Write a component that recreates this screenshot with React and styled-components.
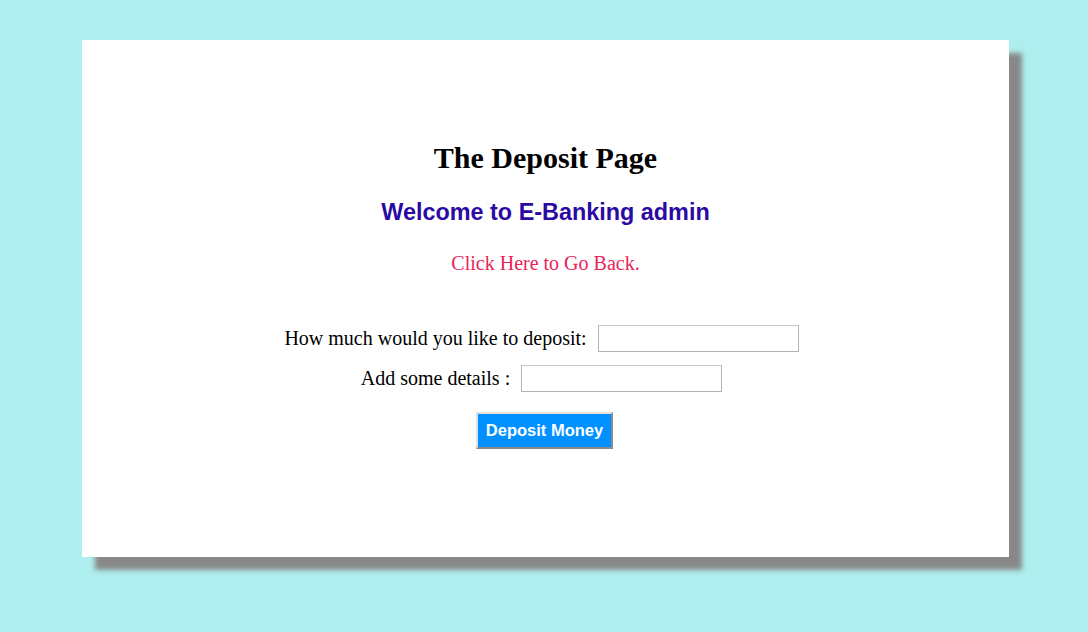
import React from 'react'
import styled, { createGlobalStyle } from 'styled-components'

const GlobalStyle = createGlobalStyle`
  html, body {
    margin: 0;
    padding: 0;
    background: #afeeee;
  }
  body {
    font-family: "Liberation Serif", "Times New Roman", serif;
  }
`

const Page = styled.div`
  padding: 40px 79px 0 82px;
  min-height: 632px;
  box-sizing: border-box;
`

const Card = styled.div`
  height: 517px;
  background: #ffffff;
  box-shadow: 13px 13px 5px #888888;
  display: flex;
  flex-direction: column;
  align-items: center;
  padding-top: 101px;
  box-sizing: border-box;
`

const Title = styled.h2`
  margin: 0;
  font-size: 30px;
  font-weight: bold;
  color: #000;
`

const Welcome = styled.h3`
  margin: 24px 0 0;
  font-family: "Liberation Sans", Arial, sans-serif;
  font-size: 23.4px;
  font-weight: bold;
  color: #2b0aa3;
`

const BackLink = styled.a`
  margin-top: 26px;
  font-size: 20px;
  color: #e8235a;
  text-decoration: none;
  cursor: pointer;
`

const Form = styled.form`
  margin-top: 50px;
  display: flex;
  flex-direction: column;
  align-items: center;
  gap: 13px;
`

const Row = styled.div`
  display: flex;
  align-items: center;
  gap: 11px;
  margin-right: 8px;
`

const Label = styled.label`
  font-size: 20px;
  color: #000;
`

const Input = styled.input`
  width: 201px;
  height: 27px;
  box-sizing: border-box;
  border: 1px solid #b3b3b3;
  border-top-color: #c8c8c8;
  outline: none;
`

const Button = styled.button`
  margin-top: 7px;
  margin-right: 2px;
  padding: 0 8px;
  height: 37px;
  box-sizing: border-box;
  background: #0090ff;
  color: #fff;
  font-family: "Liberation Sans", Arial, sans-serif;
  font-size: 16.5px;
  font-weight: bold;
  border: 2px solid;
  border-color: #e0e0e0 #8a8a8a #8a8a8a #e0e0e0;
  cursor: pointer;
`

export default function App() {
  return (
    <>
      <GlobalStyle />
      <Page>
        <Card>
          <Title>The Deposit Page</Title>
          <Welcome>Welcome to E-Banking admin</Welcome>
          <BackLink href="#">Click Here to Go Back.</BackLink>
          <Form onSubmit={e => e.preventDefault()}>
            <Row>
              <Label>How much would you like to deposit:</Label>
              <Input type="text" name="amount" />
            </Row>
            <Row>
              <Label>Add some details :</Label>
              <Input type="text" name="details" />
            </Row>
            <Button type="submit">Deposit Money</Button>
          </Form>
        </Card>
      </Page>
    </>
  )
}
